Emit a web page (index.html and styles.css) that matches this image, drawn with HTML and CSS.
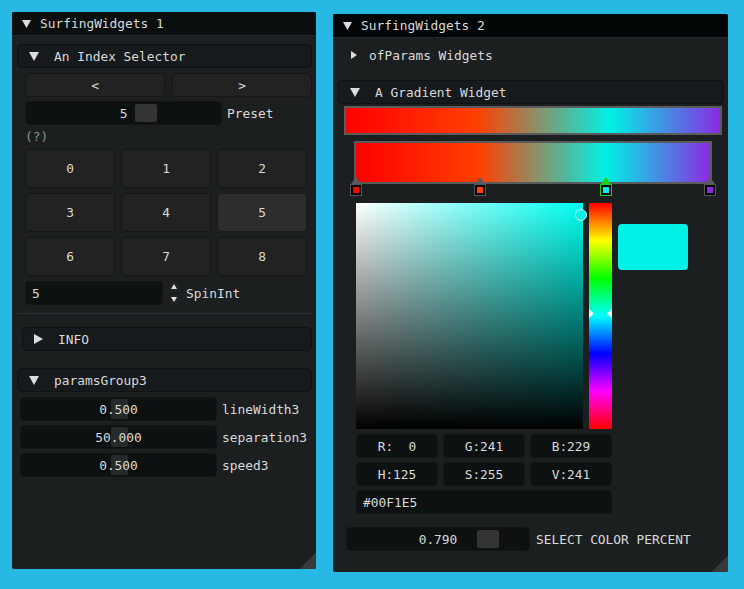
FILE: index.html
```html
<!DOCTYPE html>
<html>
<head>
<meta charset="utf-8">
<title>SurfingWidgets</title>
<link rel="stylesheet" href="styles.css">
</head>
<body>
<div class="win win1">
  <div class="titlebar t1">
    <svg class="tri-title" width="9" height="8" viewBox="0 0 9 8"><polygon points="0,0 9,0 4.5,8"/></svg>
    <span>SurfingWidgets 1</span>
  </div>
  <div class="wbody">
    <div class="hdr hdr-a">
      <svg class="tri-down" width="10" height="9" viewBox="0 0 10 9"><polygon points="0,0 10,0 5,9"/></svg>
      <span>An Index Selector</span>
    </div>
    <div class="btnrow">
      <div class="btn">&lt;</div>
      <div class="btn">&gt;</div>
    </div>
    <div class="prow">
      <div class="frame slider preset-s"><span>5</span><i class="grab grab-big" style="left:109px"></i></div>
      <span class="lbl">Preset</span>
    </div>
    <div class="help">(?)</div>
    <div class="grid">
      <div class="btn cell">0</div>
      <div class="btn cell">1</div>
      <div class="btn cell">2</div>
      <div class="btn cell">3</div>
      <div class="btn cell">4</div>
      <div class="btn cell sel">5</div>
      <div class="btn cell">6</div>
      <div class="btn cell">7</div>
      <div class="btn cell">8</div>
    </div>
    <div class="spinrow">
      <div class="frame spin-in">5</div>
      <div class="arrows">
        <div class="arr"><svg width="6" height="5" viewBox="0 0 6 5"><polygon points="3,0 6,5 0,5"/></svg></div>
        <div class="arr"><svg width="6" height="5" viewBox="0 0 6 5"><polygon points="0,0 6,0 3,5"/></svg></div>
      </div>
      <span class="lbl spin-l">SpinInt</span>
    </div>
    <div class="sep"></div>
    <div class="hdr hdr-info">
      <svg class="tri-right" width="9" height="10" viewBox="0 0 9 10"><polygon points="0,0 9,5 0,10"/></svg>
      <span>INFO</span>
    </div>
    <div class="hdr hdr-pg">
      <svg class="tri-down" width="10" height="9" viewBox="0 0 10 9"><polygon points="0,0 10,0 5,9"/></svg>
      <span>paramsGroup3</span>
    </div>
    <div class="prow prow-p first">
      <div class="frame slider param-s"><span>0.500</span><i class="grab grab-soft" style="left:90px"></i></div>
      <span class="lbl">lineWidth3</span>
    </div>
    <div class="prow prow-p">
      <div class="frame slider param-s"><span>50.000</span><i class="grab grab-soft" style="left:90px"></i></div>
      <span class="lbl">separation3</span>
    </div>
    <div class="prow prow-p">
      <div class="frame slider param-s"><span>0.500</span><i class="grab grab-soft" style="left:90px"></i></div>
      <span class="lbl">speed3</span>
    </div>
  </div>
  <div class="grip"></div>
</div>

<div class="win win2">
  <div class="titlebar t2">
    <svg class="tri-title" width="9" height="8" viewBox="0 0 9 8"><polygon points="0,0 9,0 4.5,8"/></svg>
    <span>SurfingWidgets 2</span>
  </div>
  <div class="wbody">
    <div class="tree">
      <svg class="tri-small" width="6" height="8" viewBox="0 0 6 8"><polygon points="0,0 6,4 0,8"/></svg>
      <span>ofParams Widgets</span>
    </div>
    <div class="hdr hdr-g">
      <svg class="tri-down" width="10" height="9" viewBox="0 0 10 9"><polygon points="0,0 10,0 5,9"/></svg>
      <span>A Gradient Widget</span>
    </div>
    <div class="gbar gbar-top"></div>
    <div class="gwrap">
      <div class="gbar gbar-edit"></div>
      <div class="mk" style="left:-4px"><i class="mk-tri"></i><i class="mk-box" style="background:#ff0000"></i></div>
      <div class="mk" style="left:120px"><i class="mk-tri"></i><i class="mk-box" style="background:#ff4000"></i></div>
      <div class="mk on" style="left:246px"><i class="mk-tri"></i><i class="mk-box" style="background:#00f1e5"></i></div>
      <div class="mk" style="left:350px"><i class="mk-tri"></i><i class="mk-box" style="background:#8a2be2"></i></div>
    </div>
    <div class="picker">
      <div class="sv"><i class="svcur"></i></div>
      <div class="hue">
        <svg class="hue-a hue-l" width="5" height="9" viewBox="0 0 5 9"><polygon points="0,0 5,4.5 0,9"/></svg>
        <svg class="hue-a hue-r" width="5" height="9" viewBox="0 0 5 9"><polygon points="5,0 0,4.5 5,9"/></svg>
      </div>
      <div class="preview"></div>
    </div>
    <div class="crow first-c">
      <div class="frame cbox">R:  0</div>
      <div class="frame cbox">G:241</div>
      <div class="frame cbox">B:229</div>
    </div>
    <div class="crow">
      <div class="frame cbox">H:125</div>
      <div class="frame cbox">S:255</div>
      <div class="frame cbox">V:241</div>
    </div>
    <div class="crow">
      <div class="frame hex">#00F1E5</div>
    </div>
    <div class="prow pct-row">
      <div class="frame slider pct-s"><span>0.790</span><i class="grab grab-big" style="left:130px"></i></div>
      <span class="lbl pct-l">SELECT COLOR PERCENT</span>
    </div>
  </div>
  <div class="grip"></div>
</div>
</body>
</html>
```

FILE: styles.css
```css
html, body {
  margin: 0;
  padding: 0;
}
body {
  width: 744px;
  height: 589px;
  background: #28b8e4;
  font-family: "DejaVu Sans Mono", "Liberation Mono", monospace;
  font-size: 12.85px;
  color: #d9d9d9;
  position: relative;
  overflow: hidden;
}

.win {
  position: absolute;
  background: #1b1f20;
  box-sizing: border-box;
  border-radius: 2px;
  overflow: hidden;
  display: flex;
  flex-direction: column;
}
.win1 { left: 12px; top: 12px; width: 304px; height: 557px; }
.win2 { left: 333px; top: 14px; width: 395px; height: 558px; }

.titlebar {
  height: 23px;
  flex: none;
  display: flex;
  align-items: center;
  padding-left: 10px;
  border-bottom: 1px solid #1c2a2f;
}
.t1 { background: #0b0f10; }
.t2 { background: #030606; }
.tri-title { fill: #dcdcdc; margin-right: 9px; margin-top: 1px; }

.wbody {
  display: flex;
  flex-direction: column;
  flex: 1;
}

.hdr {
  height: 24px;
  box-sizing: border-box;
  background: #171a1c;
  border: 1px solid #0f1213;
  border-radius: 5px;
  display: flex;
  align-items: center;
  padding-left: 11px;
  flex: none;
}
.tri-down { fill: #dcdcdc; margin-right: 15px; }
.tri-right { fill: #dcdcdc; margin-right: 15px; }

.hdr-a { margin: 8px 4px 0 5px; }
.hdr-info { margin: 13px 4px 0 10px; height: 24px; }
.hdr-pg { margin: 17px 4px 0 5px; }
.hdr-g { margin: 16px 4px 0 5px; }

.btn {
  background: #222222;
  border: 1px solid #161616;
  border-radius: 4px;
  box-sizing: border-box;
  display: flex;
  align-items: center;
  justify-content: center;
}
.btnrow {
  display: flex;
  gap: 7px;
  margin: 5px 4px 0 13px;
  height: 24px;
}
.btnrow .btn { flex: 1; }

.frame {
  background: #0e1112;
  border: 1px solid #131617;
  border-radius: 4px;
  box-sizing: border-box;
  height: 24px;
}
.slider {
  position: relative;
  display: flex;
  align-items: center;
  justify-content: center;
}
.slider span { position: relative; z-index: 1; }
.grab {
  position: absolute;
  top: 2px;
  bottom: 2px;
  border-radius: 2px;
}
.grab-big { width: 22px; background: #333535; }
.grab-soft { width: 17px; background: #262a2b; top: 1px; bottom: 1px; }

.prow {
  display: flex;
  align-items: center;
  margin: 4px 0 0 13px;
  height: 24px;
}
.lbl { margin-left: 5px; }
.preset-s { width: 197px; }

.help {
  margin: 4px 0 0 13px;
  height: 16px;
  line-height: 16px;
  color: #8c9091;
}

.grid {
  margin: 4px 0 0 13px;
  display: grid;
  grid-template-columns: 90px 90px 90px;
  grid-auto-rows: 39px;
  gap: 5px 6px;
}
.cell.sel { background: #2d2d2d; border-color: #1a1a1a; }

.spinrow {
  display: flex;
  align-items: center;
  margin: 5px 0 0 13px;
  height: 24px;
}
.spin-in {
  width: 138px;
  display: flex;
  align-items: center;
  padding-left: 6px;
}
.arrows {
  display: flex;
  flex-direction: column;
  gap: 3px;
  margin-left: 6px;
}
.arr {
  width: 10px;
  height: 10px;
  border-radius: 4px;
  background: #202324;
  display: flex;
  align-items: center;
  justify-content: center;
}
.arr svg { fill: #e0e0e0; }
.spin-l { margin-left: 7px; }

.sep {
  height: 1px;
  background: #2b3032;
  margin: 8px 4px 0 5px;
}

.prow-p { margin: 4px 0 0 8px; }
.prow-p.first { margin-top: 5px; }
.param-s { width: 197px; }

/* window 2 */
.tree {
  display: flex;
  align-items: center;
  height: 18px;
  margin: 8px 0 0 18px;
}
.tri-small { fill: #dcdcdc; margin-right: 12px; }

.gbar {
  box-sizing: border-box;
  border: 2px solid #595b5c;
  background: linear-gradient(to right, #ff0000 0%, #ff4000 35%, #00f1e5 70.6%, #8a2be2 100%);
}
.gbar-top {
  margin: 2px 0 0 11px;
  width: 378px;
  height: 29px;
}
.gwrap {
  position: relative;
  margin: 6px 0 0 21px;
  width: 358px;
  height: 56px;
}
.gbar-edit { width: 358px; height: 43px; }
.mk {
  position: absolute;
  top: 36px;
  width: 12px;
  display: flex;
  flex-direction: column;
  align-items: center;
}
.mk-tri {
  width: 0;
  height: 0;
  border-left: 5px solid transparent;
  border-right: 5px solid transparent;
  border-bottom: 7px solid #595b5c;
}
.mk-box {
  display: block;
  width: 12px;
  height: 12px;
  box-sizing: border-box;
  border: 1px solid #555;
  box-shadow: inset 0 0 0 2px #000;
}
.mk.on .mk-tri { border-bottom-color: #19d019; }
.mk.on .mk-box { border-color: #19d019; }

.picker {
  display: flex;
  align-items: flex-start;
  margin: 6px 0 0 23px;
  gap: 6px;
}
.sv {
  position: relative;
  width: 227px;
  height: 226px;
  background:
    linear-gradient(to bottom, rgba(0,0,0,0), #000),
    linear-gradient(to right, #fff, #00fff2);
}
.svcur {
  position: absolute;
  left: 219px;
  top: 6px;
  width: 12px;
  height: 12px;
  box-sizing: border-box;
  border-radius: 50%;
  border: 1.5px solid #e8e8e8;
  background: #00f1e5;
}
.hue {
  position: relative;
  width: 23px;
  height: 226px;
  background: linear-gradient(to bottom, #f00 0%, #ff0 16.67%, #0f0 33.33%, #0ff 50%, #00f 66.67%, #f0f 83.33%, #f00 100%);
}
.hue-a { position: absolute; top: 106px; fill: #f0f0f0; }
.hue-l { left: 0; }
.hue-r { right: 0; }
.preview {
  width: 70px;
  height: 46px;
  margin-top: 21px;
  background: #00f1e5;
  border-radius: 4px;
}

.crow {
  display: flex;
  gap: 5px;
  margin: 4px 0 0 23px;
}
.crow.first-c { margin-top: 5px; }
.cbox {
  width: 82px;
  display: flex;
  align-items: center;
  justify-content: center;
  white-space: pre;
}
.hex {
  width: 256px;
  display: flex;
  align-items: center;
  padding-left: 6px;
}
.pct-row { margin: 13px 0 0 13px; }
.pct-s { width: 184px; }
.pct-l { margin-left: 6px; }

.grip {
  position: absolute;
  right: 0;
  bottom: 0;
  width: 16px;
  height: 16px;
  background: linear-gradient(to bottom right, transparent 50%, #37393b 50%);
}
```
